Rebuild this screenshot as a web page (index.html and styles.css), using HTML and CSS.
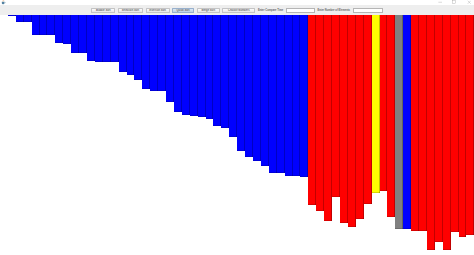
FILE: index.html
```html
<!DOCTYPE html>
<html lang="en">
  <head>
    <meta charset="UTF-8" />
    <meta name="viewport" content="width=device-width, initial-scale=1.0" />
    <title>Sorting Visualizer</title>
    <link rel="stylesheet" href="styles.css">
  </head>
  <body>
    <div class="titlebar">
      <svg class="app-icon" viewBox="0 0 6 6">
        <path d="M1 2.2h3v1.6a1.3 1.3 0 0 1-1.3 1.3h-0.4A1.3 1.3 0 0 1 1 3.8z" fill="#5382a1" />
        <path d="M4 2.6h0.6a0.6 0.6 0 0 1 0 1.2H4" fill="none" stroke="#5382a1" stroke-width="0.4" />
        <path d="M2.2 0.4q0.6 0.6 0 1.2M3 0.3q0.6 0.6 0 1.2" fill="none" stroke="#e76f00" stroke-width="0.4" />
      </svg>
      <div class="controls">
        <svg class="ctl" viewBox="0 0 6 6"><path d="M0.5 3h5" stroke="#777" stroke-width="0.5" /></svg>
        <svg class="ctl" viewBox="0 0 6 6"><rect x="1" y="1" width="4" height="4" fill="none" stroke="#777" stroke-width="0.5" /></svg>
        <svg class="ctl" viewBox="0 0 6 6"><path d="M1 1l4 4M5 1l-4 4" stroke="#777" stroke-width="0.5" /></svg>
      </div>
    </div>

    <div class="toolbar">
      <button class="btn btn-bubble">Bubble Sort</button>
      <button class="btn btn-selection">Selection Sort</button>
      <button class="btn btn-insertion">Insertion Sort</button>
      <button class="btn btn-quick active">Quick Sort</button>
      <button class="btn btn-merge">Merge Sort</button>
      <button class="btn btn-choose">Choose Numbers</button>
      <label class="field-label" for="compare-time">Enter Compare Time</label>
      <input class="field field-time" type="text" id="compare-time" />
      <label class="field-label" for="element-count">Enter Number of Elements</label>
      <input class="field field-count" type="text" id="element-count" />
    </div>

    <div class="chart" id="chart"></div>

    <script>
      const chart = document.getElementById("chart");
      const chartTop = 14.5;

      // bottom edge of every bar, in px from the top of the window
      const bottoms = [
        14.5, 16, 21.7, 21.7, 35, 35, 35, 43.3, 44.3, 52.7,
        52.7, 61, 61.7, 62, 62, 72.3, 75, 80, 89, 91,
        91, 101.7, 111.7, 114.5, 116, 116.5, 119.3, 126, 128.3, 137,
        150.7, 156.7, 161, 166, 173, 173, 175.7, 176, 176.7, 205,
        211, 221, 196.7, 222.7, 226.7, 219, 204.3, 192.7, 190.7, 216.7,
        229, 229.3, 230.7, 230.7, 250, 241.7, 250, 231.7, 236.7, 235,
      ];

      const special = { 47: "pivot", 50: "compare", 51: "current" };

      bottoms.forEach((bottom, index) => {
        const bar = document.createElement("div");
        let state = index <= 38 ? "sorted" : "unsorted";
        if (special[index]) state = special[index];
        bar.className = "bar " + state;
        bar.style.height = bottom - chartTop + "px";
        chart.appendChild(bar);
      });
    </script>
  </body>
</html>
```

FILE: styles.css
```css
* {
  margin: 0;
  padding: 0;
  box-sizing: border-box;
}

body {
  font-family: "Liberation Sans", Arial, sans-serif;
  background-color: #fff;
  width: 474px;
  height: 255px;
  overflow: hidden;
}

.titlebar {
  height: 4.5px;
  background-color: #fff;
  display: flex;
  justify-content: space-between;
  align-items: flex-start;
}

.app-icon {
  width: 5px;
  height: 5px;
  margin-left: 0.5px;
}

.controls {
  display: flex;
  gap: 10px;
  margin-right: 3px;
  opacity: 0.7;
}

.ctl {
  width: 4.5px;
  height: 4.5px;
}

.toolbar {
  height: 10px;
  background-color: #eeeeee;
  display: flex;
  justify-content: center;
  align-items: center;
  gap: 2.6px;
  padding-top: 1.4px;
}

.btn {
  height: 5.3px;
  font-family: "Liberation Sans", Arial, sans-serif;
  font-size: 2.6px;
  font-weight: bold;
  color: #666;
  background: linear-gradient(#fdfdfd, #e6e6e6);
  border: 0.5px solid #c4c4c4;
  border-radius: 0.5px;
  white-space: nowrap;
  overflow: hidden;
}

.btn.active {
  background: linear-gradient(#dde9f5, #bcd0e6);
  border-color: #98b0cc;
}

.btn-bubble { width: 24px; }
.btn-selection { width: 25px; }
.btn-insertion { width: 24px; }
.btn-quick { width: 22px; }
.btn-merge { width: 23px; }
.btn-choose { width: 33px; }

.field-label {
  font-size: 2.6px;
  font-weight: bold;
  color: #666;
  white-space: nowrap;
}

.field {
  height: 5px;
  background-color: #fff;
  border: 0.5px solid #b5b5b5;
  outline: none;
}

.field-time { width: 29px; }
.field-count { width: 30px; }

.chart {
  display: flex;
  align-items: flex-start;
  height: 240.5px;
  background-color: #fff;
}

.bar {
  flex: 0 0 7.92px;
  box-shadow: inset -0.8px 0 rgba(0, 0, 0, 0.3), inset 0 -0.6px rgba(0, 0, 0, 0.3);
}

.bar.sorted { background-color: #0000ff; }
.bar.unsorted { background-color: #ff0000; }
.bar.pivot { background-color: #ffff00; }
.bar.compare { background-color: #808080; }
.bar.current { background-color: #0000ff; }
```
